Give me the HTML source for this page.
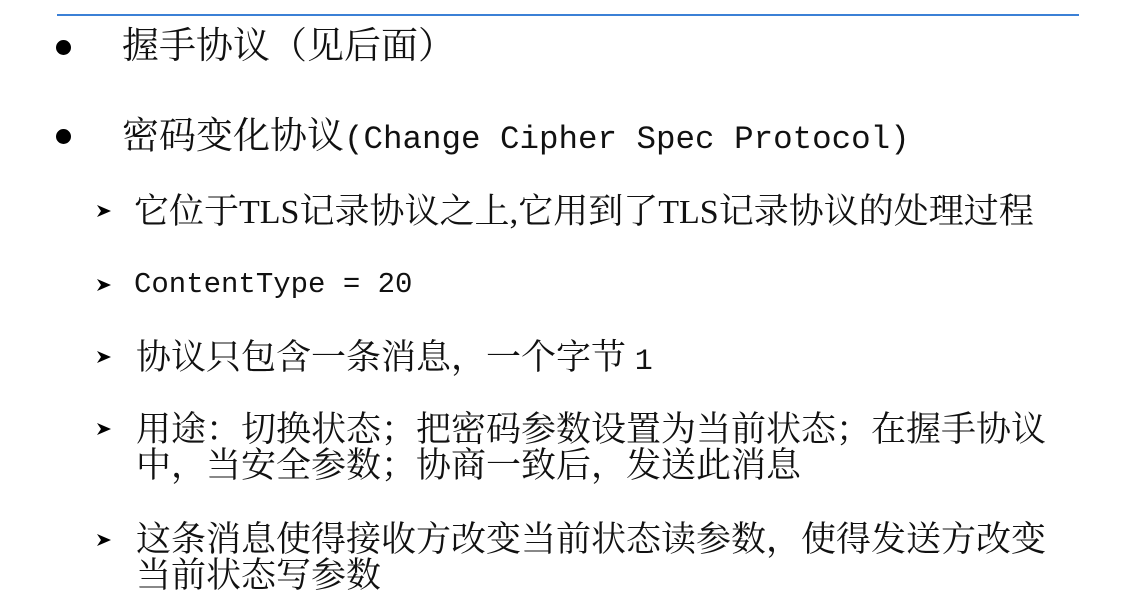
<!DOCTYPE html>
<html><head><meta charset="utf-8"><style>
html,body{margin:0;padding:0;background:#fff;width:1147px;height:614px;overflow:hidden;position:relative}
.t{position:absolute;white-space:nowrap;font-family:"Liberation Serif","Noto Serif CJK SC","Noto Sans CJK SC",serif;color:#111;line-height:1}
.m{font-family:"Liberation Mono",monospace}
.b{position:absolute;width:15px;height:15px;border-radius:50%;background:#000}
.a{position:absolute}
</style></head><body>
<div style="position:absolute;left:57px;top:14px;width:1022px;height:2px;background:#3b80d6"></div>

<div class="b" style="left:56px;top:40px"></div>
<div class="t" style="left:122px;top:28px;font-size:37px">握手协议（见后面）</div>

<div class="b" style="left:56px;top:129px"></div>
<div class="t" style="left:122px;top:118px;font-size:37px">密码变化协议<span class="m" style="font-size:32.5px">(Change Cipher Spec Protocol)</span></div>

<svg class="a" style="left:96px;top:203px" width="16" height="16" viewBox="0 0 16 16"><path d="M1 2 L15 8 L1 14 L5 8 Z" fill="#000"/></svg>
<div class="t" style="left:134px;top:194px;font-size:35px">它位于<span style="font-size:34px">TLS</span>记录协议之上,它用到了<span style="font-size:34px">TLS</span>记录协议的处理过程</div>

<svg class="a" style="left:96px;top:277px" width="16" height="16" viewBox="0 0 16 16"><path d="M1 2 L15 8 L1 14 L5 8 Z" fill="#000"/></svg>
<div class="t m" style="left:134px;top:270px;font-size:29px">ContentType = 20</div>

<svg class="a" style="left:96px;top:349px" width="16" height="16" viewBox="0 0 16 16"><path d="M1 2 L15 8 L1 14 L5 8 Z" fill="#000"/></svg>
<div class="t" style="left:136px;top:340px;font-size:35px">协议只包含一条消息，一个字节 <span class="m" style="font-size:30px">1</span></div>

<svg class="a" style="left:96px;top:421px" width="16" height="16" viewBox="0 0 16 16"><path d="M1 2 L15 8 L1 14 L5 8 Z" fill="#000"/></svg>
<div class="t" style="left:136px;top:412px;font-size:35px">用途：切换状态；把密码参数设置为当前状态；在握手协议</div>
<div class="t" style="left:136px;top:448px;font-size:35px">中，当安全参数；协商一致后，发送此消息</div>

<svg class="a" style="left:96px;top:532px" width="16" height="16" viewBox="0 0 16 16"><path d="M1 2 L15 8 L1 14 L5 8 Z" fill="#000"/></svg>
<div class="t" style="left:136px;top:522px;font-size:35px">这条消息使得接收方改变当前状态读参数，使得发送方改变</div>
<div class="t" style="left:136px;top:558px;font-size:35px">当前状态写参数</div>
</body></html>
